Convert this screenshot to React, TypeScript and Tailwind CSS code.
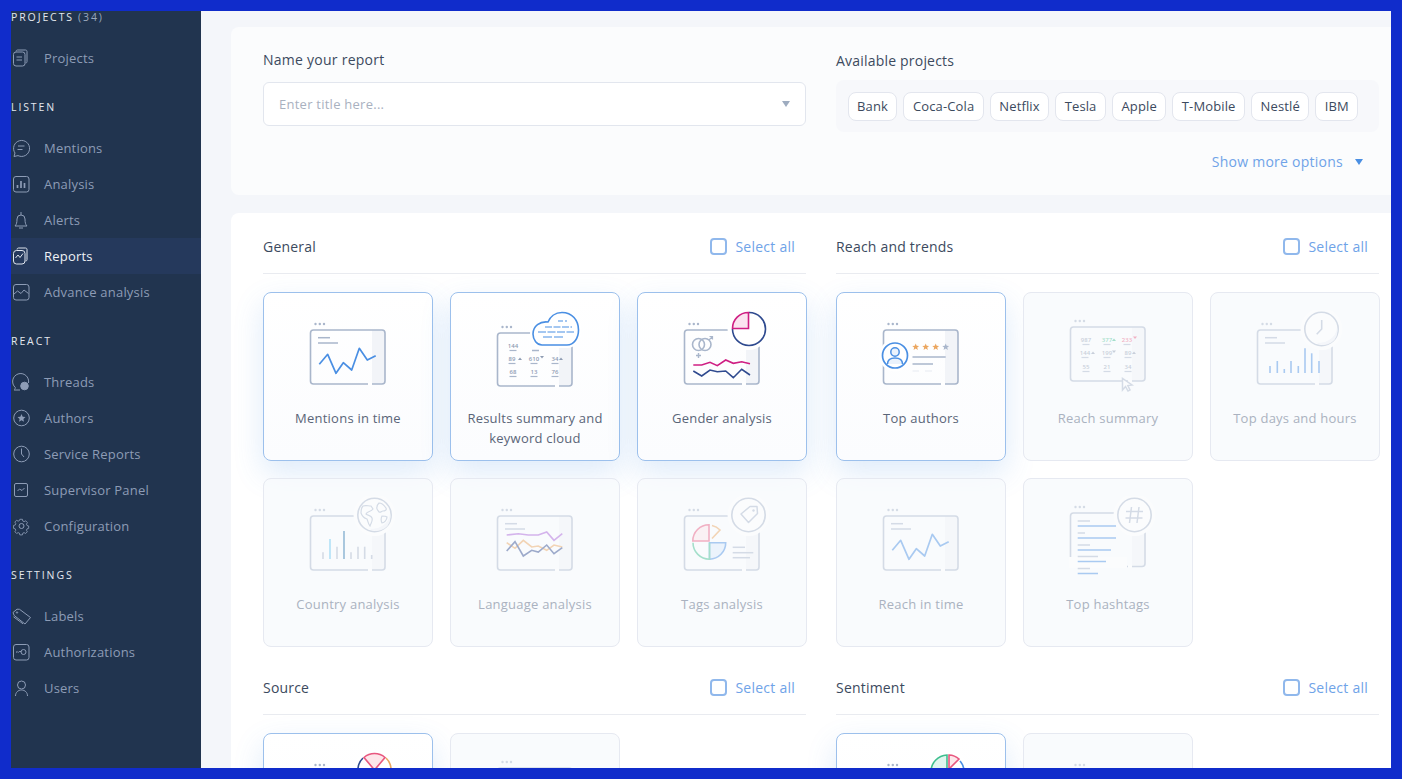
import React from "react";

const G = "#a9b6cb";
const B = "#4a8fe3";

const line = (x1: number, y1: number, x2: number, y2: number, c = G, w = 1.5, dash?: string) => (
  <line x1={x1} y1={y1} x2={x2} y2={y2} stroke={c} strokeWidth={w} strokeDasharray={dash} />
);

const Win = ({ y = 20, bottom = 74 }: { y?: number; bottom?: number }) => (
  <>
    <rect x={89} y={y} width={13} height={bottom - y} fill="#f2f4f8" />
    <rect x={27.5} y={y} width={74.5} height={bottom - y} rx={3} fill="none" stroke={G} strokeWidth={1.6} />
    <rect x={85} y={bottom - 1.5} width={4} height={3} fill="#ffffff" />
    <circle cx={32.5} cy={y - 6} r={1.2} fill={G} />
    <circle cx={36.8} cy={y - 6} r={1.2} fill={G} />
    <circle cx={41} cy={y - 6} r={1.2} fill={G} />
  </>
);

const Halo = ({ cx = 91.5, cy = 19, r = 17 }: { cx?: number; cy?: number; r?: number }) => (
  <circle cx={cx} cy={cy} r={r + 4} fill="#ffffff" />
);

const Art = ({ children }: { children: React.ReactNode }) => (
  <svg width="130" height="90" viewBox="0 0 130 90" fill="none" className="block shrink-0">
    {children}
  </svg>
);

const WAVE = "36.3,54.3 44.7,44.3 53,63.3 60.3,52.7 68.7,60 76.3,38.3 84.3,50 92.7,45.7";

const TextLines = () => (
  <>
    {line(35, 27.7, 47, 27.7)}
    {line(35, 33, 55, 33)}
  </>
);

const Num = ({ x, y, t, c = "#8f9cb3" }: { x: number; y: number; t: string; c?: string }) => (
  <>
    <text x={x} y={y} fontSize="6" fontWeight="600" fill={c} textAnchor="middle" fontFamily="Open Sans, sans-serif">
      {t}
    </text>
    {line(x - 3.5, y + 2.5, x + 3.5, y + 2.5, "#a9b6cb", 1.2)}
  </>
);

const Tri = ({ x, y, up, c = "#8f9cb3" }: { x: number; y: number; up?: boolean; c?: string }) => (
  <path d={up ? `M${x} ${y}l2-2.4 2 2.4z` : `M${x} ${y - 2.4}h4l-2 2.4z`} fill={c} />
);

const star = (cx: number, cy: number, c: string) => {
  const pts: string[] = [];
  for (let i = 0; i < 10; i++) {
    const r = i % 2 ? 1.6 : 3.6;
    const a = (Math.PI / 5) * i - Math.PI / 2;
    pts.push(`${(cx + r * Math.cos(a)).toFixed(2)},${(cy + r * Math.sin(a)).toFixed(2)}`);
  }
  return <polygon points={pts.join(" ")} fill={c} />;
};

const MentionsArt = () => (
  <Art>
    <Win />
    <TextLines />
    <polyline points={WAVE} stroke={B} strokeWidth={1.7} strokeLinejoin="round" />
  </Art>
);

const CLOUD = "M72 35H97C104 35 108.500 28 108.500 20C108.500 10 102 2.500 92 2.500C85 2.500 80 7 78 12C70 11 63 16 63 24C63 30 67 35 72 35Z";

const SummaryArt = () => (
  <Art>
    <Win y={23} bottom={76} />
    <Num x={43} y={38} t="144" />
    {line(62, 40.5, 69, 40.5)}
    <Num x={42} y={51} t="89" />
    <Tri x={48} y={50} up />
    <Num x={64} y={51} t="610" />
    <Tri x={70} y={48.5} />
    <Num x={85} y={51} t="34" />
    <Tri x={89} y={50} up />
    <Num x={43} y={64} t="68" />
    <Num x={64} y={64} t="13" />
    <Num x={85} y={64} t="76" />
    <path d={CLOUD} fill="#fff" stroke="#fff" strokeWidth={6} />
    <path d={CLOUD} fill="#fff" stroke={B} strokeWidth={1.6} />
    {line(88, 11, 97, 11, B, 1.2, "5 2")}
    {line(75, 17, 102, 17, B, 1.2, "7 1.500")}
    {line(68, 22, 104, 22, B, 1.2, "8 1.500")}
    {line(73, 27, 95, 27, B, 1.2, "9 2")}
  </Art>
);

const GenderArt = () => (
  <Art>
    <Win />
    <Halo />
    <circle cx={41.5} cy={34.5} r={6} stroke={G} strokeWidth={1.6} />
    <circle cx={48} cy={34.5} r={6} stroke={G} strokeWidth={1.6} />
    <path d="M52 30l3-3M52.500 26.500h3v3" stroke={G} strokeWidth={1.2} />
    <path d="M41.500 43v5M39 45.500h5" stroke={G} strokeWidth={1.4} />
    <polyline points="36.3,55 44.7,55 53,52.3 60.3,55.7 68.7,50 76.3,53.3 84.7,51.7 93,53.7" stroke="#cf1f83" strokeWidth={1.6} />
    <polyline points="36.3,61 44.7,66 53,60 60.3,61.7 68.7,61 76.3,67.7 84.7,59.3 93,65" stroke="#2f4a8f" strokeWidth={1.6} />
    <path d="M92 2.500A16.500 16.500 0 1 1 75.500 19" stroke="#2f4a8f" strokeWidth={1.6} />
    <path d="M91.500 2.500V18.500H75.500A16 16 0 0 1 91.500 2.500Z" fill="#fbe4f0" stroke="#cf1f83" strokeWidth={1.6} />
  </Art>
);

const AuthorsArt = () => (
  <Art>
    <Win />
    <circle cx={39} cy={45.5} r={16} fill="#fff" />
    <circle cx={39} cy={45.5} r={12.5} fill="#fff" stroke={B} strokeWidth={1.7} />
    <circle cx={39} cy={42} r={4.2} stroke={B} strokeWidth={1.5} fill="#eaf2fc" />
    <path d="M31.500 54c0-4 3-6 7.500-6s7.500 2 7.500 6" stroke={B} strokeWidth={1.5} fill="#eaf2fc" />
    {star(59.7, 37, "#eba65f")}
    {star(69.7, 37, "#eba65f")}
    {star(79.7, 37, "#eba65f")}
    {star(89.7, 37, "#a9b6cb")}
    {line(56.5, 47, 89.7, 47)}
    {line(56.5, 54, 77, 54)}
    {line(56.5, 61, 63, 61, "#eef1f6")}
    {line(69, 61, 76, 61, "#eef1f6")}
  </Art>
);

const ReachSummaryArt = () => (
  <Art>
    <Win y={17} bottom={71} />
    <Num x={43} y={32} t="987" />
    <Num x={64} y={32} t="377" c="#3fbf8f" />
    <Tri x={69} y={31} up c="#3fbf8f" />
    <Num x={84} y={32} t="233" c="#e8577f" />
    <Tri x={90} y={29} c="#e8577f" />
    <Num x={42} y={45} t="144" />
    <Tri x={48} y={44} up />
    <Num x={64} y={45} t="199" />
    <Tri x={69} y={43} />
    <Num x={85} y={45} t="89" />
    <Tri x={89} y={44} up />
    <Num x={43} y={59} t="55" />
    <Num x={64} y={59} t="21" />
    <Num x={85} y={59} t="34" />
    <path d="M79.500 68.500L79.500 80L82.500 76.500L85 81L87 80L84.800 75.500L89 75Z" fill="#fff" stroke={G} strokeWidth={1.5} />
  </Art>
);

const Bars = ({ xs, tops, colors }: { xs: number[]; tops: number[]; colors: string[] }) => (
  <>
    {xs.map((x, i) => (
      <line key={i} x1={x} y1={tops[i]} x2={x} y2={63} stroke={colors[i]} strokeWidth={1.6} />
    ))}
  </>
);

const DaysArt = () => (
  <Art>
    <Win />
    <TextLines />
    <Bars
      xs={[40, 47.3, 54.3, 61, 68.3, 75, 81.7, 89]}
      tops={[56, 51, 59, 51, 56, 38.3, 43.3, 51]}
      colors={Array(8).fill(B)}
    />
    <Halo />
    <circle cx={91.5} cy={19} r={16.7} fill="#fff" stroke={G} strokeWidth={1.6} />
    <path d="M85 32a16 16 0 0 0 14-2a16 16 0 0 0 8-13a14 14 0 0 1-22 15z" fill="#eef1f7" />
    <path d="M91.700 10V19L86.700 24.300" stroke={G} strokeWidth={1.6} />
  </Art>
);

const CountryArt = () => (
  <Art>
    <Win />
    <Bars
      xs={[40, 47, 54, 61, 68, 75, 81.7, 88.7]}
      tops={[56.3, 43, 50.7, 35, 56.3, 50.7, 50.7, 59]}
      colors={[G, "#5cc3ef", G, "#1f6fa8", G, G, G, G]}
    />
    <Halo />
    <circle cx={91.5} cy={19} r={16.7} fill="#fff" stroke={G} strokeWidth={1.6} />
    <path d="M85 32a16 16 0 0 0 14-2a16 16 0 0 0 8-13a14 14 0 0 1-22 15z" fill="#eef1f7" />
    <path d="M80 10c3-1 5 0 8 0l2 3c-2 3-6 2-7 5c2 2 5 1 6 4c1 3-1 5-2 8c-2-2-2-5-3-7c-3-1-5-3-6-6c0-3 0-5 2-7zM96 7c2 0 5 2 7 5c1 2-1 3-3 3c-2 0-2 2-4 1c-1-2-3-3-2-5c0-2 1-3 2-4zM99 20c2 0 4 0 5 1c0 3-3 6-5 6c-1-2-1-5 0-7z" fill="#fff" stroke={G} strokeWidth={1.2} />
  </Art>
);

const LanguageArt = () => (
  <Art>
    <Win />
    <TextLines />
    <polyline points="36.7,39 48.3,37.7 58.3,39 68.3,39 76.7,36 84,44.3 92.3,37.7" stroke="#a85fd8" strokeWidth={1.6} />
    <polyline points="36.7,46.7 45,52.3 53.3,44.3 61.7,51 68.3,50 76.7,54.3 84,49 92.3,51" stroke="#eba65f" strokeWidth={1.6} />
    <polyline points="36.7,55 45,45.7 53.3,60 61.7,54.3 68.3,56 76.7,49 84,57.7 92.3,51.7" stroke="#2f4a8f" strokeWidth={1.6} />
  </Art>
);

const TagsArt = () => (
  <Art>
    <Win />
    <Halo />
    <circle cx={91.5} cy={19} r={16.7} fill="#fff" stroke={G} strokeWidth={1.6} />
    <path d="M84 18L93 10.500L100 10.500L100.500 17.500L91.500 26.500Z" fill="#fff" stroke={G} strokeWidth={1.5} strokeLinejoin="round" />
    <circle cx={96.5} cy={14.5} r={1.2} fill={G} />
    <path d="M52.500 46.700H68.700A16.500 16.500 0 0 1 52.500 63.200Z" fill="#dcebfb" stroke={B} strokeWidth={1.6} />
    <path d="M52.500 46.700V63.200A16.500 16.500 0 0 1 36 46.700" stroke="#3fbf8f" strokeWidth={1.6} />
    <path d="M52 45H35.800A16.200 16.200 0 0 1 52 28.800Z" fill="#fde6ea" stroke="#e8577f" strokeWidth={1.6} />
    <path d="M55 29.500A16 16 0 0 1 63 34L55 42.500" stroke="#eba65f" strokeWidth={1.6} />
    {line(75.7, 51.3, 88, 51.3)}
    {line(75.7, 56.7, 96.3, 56.7)}
    {line(75.7, 61.7, 93, 61.7)}
  </Art>
);

const ReachTimeArt = () => (
  <Art>
    <Win />
    <TextLines />
    <polyline points={WAVE} stroke={B} strokeWidth={1.7} strokeLinejoin="round" />
  </Art>
);

const HashArt = () => (
  <Art>
    <Win y={17} bottom={70.5} />
    <rect x={26} y={61} width={58} height={11} fill="#fff" />
    {line(34.7, 25, 47, 25)}
    {line(34.7, 30, 73, 30, B)}
    {line(34.7, 37, 42, 37)}
    {line(34.7, 42, 73, 42, B)}
    {line(34.7, 49, 47, 49)}
    {line(34.7, 54, 68, 54, B)}
    {line(34.7, 60.5, 55, 60.5)}
    {line(34.7, 65.5, 63, 65.5, B)}
    {line(34.7, 72.5, 47, 72.5)}
    {line(34.7, 77.5, 55, 77.5, B)}
    <Halo />
    <circle cx={91.5} cy={19} r={16.7} fill="#fff" stroke={G} strokeWidth={1.6} />
    <path d="M88.500 11L86.500 27M96 11L94 27M83 15.500H100M82.500 22H99.500" stroke={G} strokeWidth={1.5} />
  </Art>
);

const SourceArt = () => (
  <Art>
    <Win />
    <Halo />
    <path d="M80 7A16.700 16.700 0 0 0 80 31" stroke="#2f4a8f" strokeWidth={1.6} />
    <path d="M103 7A16.700 16.700 0 0 1 103 31" stroke="#eba65f" strokeWidth={1.6} />
    <path d="M81 6.500A16 16 0 0 1 102 6.500L91.500 19Z" fill="#fde6ea" stroke="#e8577f" strokeWidth={1.6} />
  </Art>
);

const BlankArt = ({ y = 17 }: { y?: number }) => (
  <Art>
    <Win y={y} bottom={y + 54} />
  </Art>
);

const SentimentArt = () => (
  <Art>
    <Win />
    <Halo />
    <path d="M91 21V4A16.700 16.700 0 0 0 75 21Z" fill="#e0f6ee" stroke="#3fbf8f" strokeWidth={1.6} />
    <path d="M93 4A16 16 0 0 1 103 8L93 18Z" fill="#fde6ea" stroke="#e8577f" strokeWidth={1.6} />
    <path d="M104 10A16 16 0 0 1 108 21" stroke={B} strokeWidth={1.6} />
  </Art>
);

const Card = ({ label, on, art }: { label?: string; on?: boolean; art: React.ReactNode }) => (
  <div
    className={
      on
        ? "h-[169px] rounded-[8px] border-[1.5px] border-[#9cc0ec] bg-gradient-to-b from-white to-[#fbfcfe] shadow-[0_12px_30px_rgba(74,143,227,0.18)] flex flex-col items-center pt-[17px]"
        : "h-[169px] rounded-[8px] border-[1.5px] border-[#e6e9f1] bg-[#f8fafd]/80 flex flex-col items-center pt-[17px]"
    }
  >
    <div className={on ? "h-[90px]" : "h-[90px] opacity-45"}>{art}</div>
    {label && (
      <div
        className={
          on
            ? "mt-[8px] w-[150px] text-center text-[13px] leading-[20px] tracking-[0.23px] text-[#5a6578]"
            : "mt-[8px] w-[150px] text-center text-[13px] leading-[20px] tracking-[0.23px] text-[#aab2c0]"
        }
      >
        {label}
      </div>
    )}
  </div>
);

const Section = ({ title, children, top }: { title: string; children: React.ReactNode; top?: boolean }) => (
  <div className={top ? "" : "mt-[26px]"}>
    <div className="h-[42px] flex items-start justify-between border-b-[1.5px] border-[#e9ebf0] pr-[11px]">
      <div className="h-[28px] flex items-center text-[14px] tracking-[0.2px] text-[#3c4a5e]">{title}</div>
      <div className="h-[28px] flex items-center gap-[8px]">
        <span className="w-[17px] h-[17px] rounded-[4px] border-2 border-[#90b8ec] bg-white" />
        <span className="text-[14px] tracking-[0.25px] text-[#6fa3e8]">Select all</span>
      </div>
    </div>
    <div className="grid grid-cols-[repeat(3,170px)] gap-[17px] mt-[18px]">{children}</div>
  </div>
);

const I = ({ children }: { children: React.ReactNode }) => (
  <svg width="18" height="18" viewBox="0 0 18 18" fill="none" stroke="currentColor" strokeWidth="1" className="shrink-0 overflow-visible">
    {children}
  </svg>
);

const icons: Record<string, React.ReactNode> = {
  Projects: (
    <I>
      <path d="M4 2.500c0-1 .8-1.500 1.500-1.500h8c1 0 1.500.7 1.500 1.500v10c0 1-.6 1.500-1.400 1.500" />
      <rect x="1.500" y="3" width="11.500" height="14" rx="2.500" />
      <path d="M4.500 8h5.500M4.500 11h5.500" />
    </I>
  ),
  Mentions: (
    <I>
      <path d="M2 17.500l1-3.500a8 8 0 1 1 3 2.600z" />
      <path d="M6 7h6.500M5.500 10.500h5" />
    </I>
  ),
  Analysis: (
    <I>
      <rect x="1.500" y="1.500" width="15.500" height="15.500" rx="2.500" />
      <path d="M5.500 13V10M9 13V6M12.500 13V8" strokeWidth="1.7" />
    </I>
  ),
  Alerts: (
    <I>
      <path d="M3 15c1.500-1.500 2-3.500 2-7a4 4 0 0 1 8 0c0 3.500.5 5.500 2 7z" />
      <path d="M9 4V1M7 17h4" />
    </I>
  ),
  Reports: (
    <I>
      <path d="M5 2.500c0-1 .8-1.500 1.500-1.500h7c1 0 1.500.7 1.500 1.500v10c0 1-.6 1.500-1.400 1.500" />
      <rect x="1.500" y="3.500" width="11.500" height="13.500" rx="3" />
      <path d="M3.500 11l2.500-3 2 2.500 3-4" />
    </I>
  ),
  "Advance analysis": (
    <I>
      <rect x="1.500" y="1.500" width="15.500" height="15.500" rx="2.500" />
      <path d="M2 11l3.500-3 3.500 2.500 3-3.500 4.500 3.500" />
    </I>
  ),
  Threads: (
    <I>
      <path d="M2.500 16.500c.5-.6.8-1.200.8-2A8 8 0 1 1 16.500 10" />
      <path d="M2 17h6" />
      <circle cx="12.500" cy="13" r="3.800" fill="currentColor" />
    </I>
  ),
  Authors: (
    <I>
      <circle cx="9.500" cy="9" r="7.800" />
      <path d="M9.500 5l1.200 2.700 2.800.3-2.100 1.900.6 2.800-2.500-1.500-2.500 1.500.6-2.800L5.500 8l2.800-.3z" fill="currentColor" stroke="none" />
    </I>
  ),
  "Service Reports": (
    <I>
      <circle cx="9.500" cy="9" r="7.800" />
      <path d="M9.500 3.500V9l2.500 3" />
    </I>
  ),
  "Supervisor Panel": (
    <I>
      <rect x="2.500" y="2.500" width="13" height="13" rx="1.500" />
      <path d="M5.500 10l2-2 2.500 1.500 2.500-2.500" />
    </I>
  ),
  Configuration: (
    <I>
      <path d="M7.700 1.500h3l.5 2.100 1.500.7 1.900-1 2 2.100-1.100 1.800.6 1.600 2 .6v2.800l-2 .6-.6 1.600 1 1.800-2 2-1.800-1-1.500.6-.5 2.100h-3l-.5-2.100-1.500-.6-1.800 1-2-2 1-1.800-.6-1.600-2-.6V8.800l2-.6.600-1.600-1.100-1.800 2-2.100 1.900 1 1.500-.7z" transform="translate(1.300 1) scale(.85)" />
      <circle cx="9.500" cy="9" r="2.500" />
    </I>
  ),
  Labels: (
    <I>
      <path d="M1 5.500L5 2.200L7.500 2.300L18.500 10.500L13 17L2.200 8.500Z" strokeLinejoin="round" />
      <path d="M11 16.800L1.500 9.800" />
      <circle cx="5" cy="5.500" r=".7" />
    </I>
  ),
  Authorizations: (
    <I>
      <rect x="1.500" y="1.500" width="15.500" height="15.500" rx="2.500" />
      <circle cx="11.500" cy="9" r="2.500" />
      <path d="M4 9.500l1.200-1 1 1 1-1H9" />
    </I>
  ),
  Users: (
    <I>
      <circle cx="9.500" cy="6" r="4" />
      <path d="M3.500 17c0-3.500 2.500-6 6-6s6 2.500 6 6" />
    </I>
  ),
};

const Item = ({ name, active }: { name: string; active?: boolean }) => (
  <div
    className={
      active
        ? "h-[36px] flex items-center gap-[14px] pl-px bg-[#25395c] text-[#eef1f6]"
        : "h-[36px] flex items-center gap-[14px] pl-px text-[#8d9cb6]"
    }
  >
    <span className={active ? "text-[#dfe5ee] flex" : "text-[#8d9cb6] flex"}>{icons[name]}</span>
    <span className="text-[13px] tracking-[0.2px] pt-[2px]">{name}</span>
  </div>
);

const Head = ({ children, first }: { children: React.ReactNode; first?: boolean }) => (
  <div
    className={
      first
        ? "h-[12px] mb-[17px] flex items-center text-[10.5px] leading-[12px] tracking-[1.9px] text-[#e4e8ef]"
        : "h-[18px] mb-[14px] mt-[22px] flex items-center text-[10.5px] leading-[12px] tracking-[1.9px] text-[#e4e8ef]"
    }
  >
    {children}
  </div>
);

const chips = ["Bank", "Coca-Cola", "Netflix", "Tesla", "Apple", "T-Mobile", "Nestlé", "IBM"];

export default function App() {
  return (
    <div className="w-[1402px] h-[779px] bg-[#102ccb] p-[11px] overflow-hidden font-['Open_Sans',sans-serif]">
      <div className="w-[1380px] h-[757px] flex overflow-hidden bg-[#f4f6fa]">
        <aside className="w-[190px] shrink-0 bg-[#21344f] overflow-hidden">
          <Head first>
            PROJECTS <span className="ml-[4px] text-[#9aa8bd]">(34)</span>
          </Head>
          <Item name="Projects" />
          <Head>LISTEN</Head>
          <Item name="Mentions" />
          <Item name="Analysis" />
          <Item name="Alerts" />
          <Item name="Reports" active />
          <Item name="Advance analysis" />
          <Head>REACT</Head>
          <Item name="Threads" />
          <Item name="Authors" />
          <Item name="Service Reports" />
          <Item name="Supervisor Panel" />
          <Item name="Configuration" />
          <Head>SETTINGS</Head>
          <Item name="Labels" />
          <Item name="Authorizations" />
          <Item name="Users" />
        </aside>
        <main className="flex-1 min-w-0 overflow-hidden pt-[16px] pl-[30px]">
          <div className="w-[1180px] h-[168px] rounded-[8px] bg-[#fbfcfd] px-[32px] grid grid-cols-2 gap-x-[30px]">
            <div className="pt-[22px]">
              <div className="h-[20px] flex items-center text-[14px] tracking-[0.25px] text-[#3c4a5e]">Name your report</div>
              <div className="mt-[13px] h-[44px] rounded-[6px] border-[1.5px] border-[#e2e6ee] bg-white flex items-center justify-between pl-[15px] pr-[15px]">
                <span className="text-[13px] tracking-[0.25px] text-[#a9b1bf] pt-[2px]">Enter title here...</span>
                <svg width="8" height="6" viewBox="0 0 8 6">
                  <path d="M0 0h8L4 6z" fill="#9eacc0" />
                </svg>
              </div>
            </div>
            <div className="pt-[23px]">
              <div className="h-[20px] flex items-center text-[14px] tracking-[0.2px] text-[#3c4a5e]">Available projects</div>
              <div className="mt-[10px] h-[52px] rounded-[8px] bg-[#f7f8fb] flex items-center gap-[6px] pl-[11.5px]">
                {chips.map((c) => (
                  <span
                    key={c}
                    className="h-[29px] px-[8.5px] pt-[2px] rounded-[8px] border-[1.5px] border-[#e3e6ee] bg-white flex items-center text-[13px] tracking-[0.13px] text-[#3c4a5e]"
                  >
                    {c}
                  </span>
                ))}
              </div>
              <div className="mt-[18px] h-[22px] flex items-center justify-end gap-[12px] pr-[16px]">
                <span className="text-[14px] tracking-[0.25px] text-[#6fa3e8]">Show more options</span>
                <svg width="8" height="6" viewBox="0 0 8 6" className="mt-[2px]">
                  <path d="M0 0h8L4 6z" fill="#4a8fe3" />
                </svg>
              </div>
            </div>
          </div>
          <div className="mt-[18px] w-[1180px] rounded-[8px] bg-white px-[32px] pt-[19px] grid grid-cols-2 gap-x-[30px]">
            <Section title="General" top>
              <Card on label="Mentions in time" art={<MentionsArt />} />
              <Card on label="Results summary and keyword cloud" art={<SummaryArt />} />
              <Card on label="Gender analysis" art={<GenderArt />} />
              <Card label="Country analysis" art={<CountryArt />} />
              <Card label="Language analysis" art={<LanguageArt />} />
              <Card label="Tags analysis" art={<TagsArt />} />
            </Section>
            <Section title="Reach and trends" top>
              <Card on label="Top authors" art={<AuthorsArt />} />
              <Card label="Reach summary" art={<ReachSummaryArt />} />
              <Card label="Top days and hours" art={<DaysArt />} />
              <Card label="Reach in time" art={<ReachTimeArt />} />
              <Card label="Top hashtags" art={<HashArt />} />
            </Section>
            <Section title="Source">
              <Card on art={<SourceArt />} />
              <Card art={<BlankArt />} />
            </Section>
            <Section title="Sentiment">
              <Card on art={<SentimentArt />} />
              <Card art={<BlankArt y={20} />} />
            </Section>
          </div>
        </main>
      </div>
    </div>
  );
}
